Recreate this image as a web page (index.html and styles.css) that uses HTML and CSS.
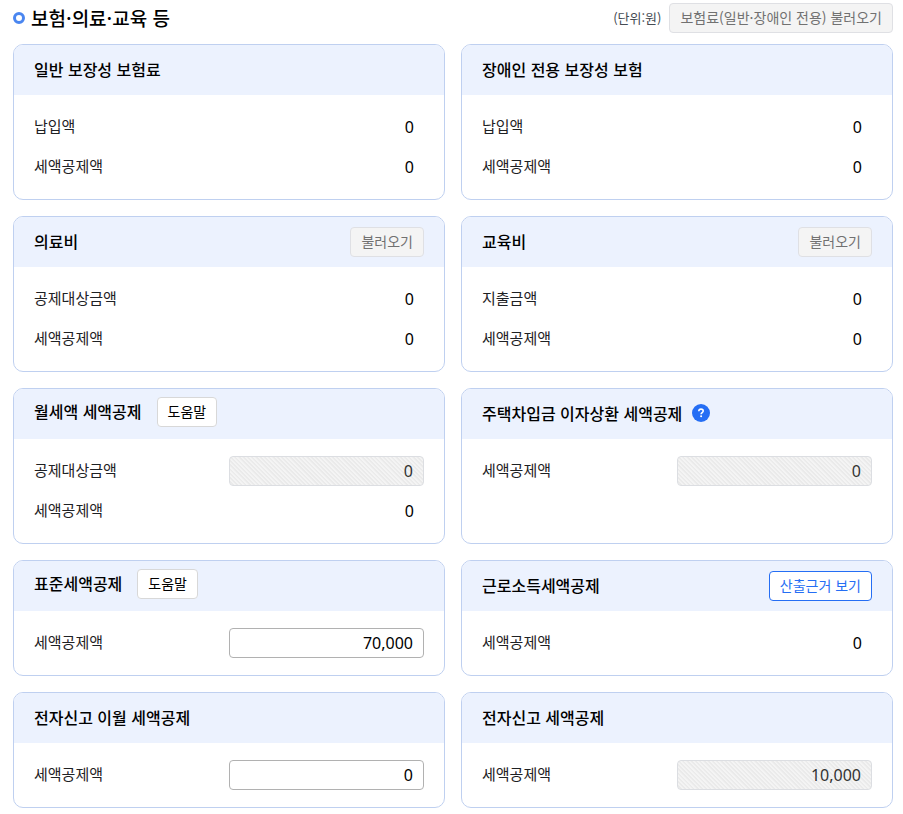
FILE: index.html
```html
<!DOCTYPE html>
<html lang="ko">
<head>
    <meta charset="UTF-8">
    <meta name="viewport" content="width=device-width, initial-scale=1.0">
    <title>보험·의료·교육 등</title>
    <link rel="stylesheet" href="styles.css">
</head>
<body>
    <header class="section-head">
        <h1 class="section-title">보험·의료·교육 등</h1>
        <div class="section-tools">
            <span class="unit">(단위:원)</span>
            <button class="btn" type="button" disabled>보험료(일반·장애인 전용) 불러오기</button>
        </div>
    </header>

    <main class="cards">
        <section class="card">
            <div class="card-head">
                <h2>일반 보장성 보험료</h2>
            </div>
            <dl class="card-body">
                <div class="row"><dt>납입액</dt><dd>0</dd></div>
                <div class="row"><dt>세액공제액</dt><dd>0</dd></div>
            </dl>
        </section>

        <section class="card">
            <div class="card-head">
                <h2>장애인 전용 보장성 보험</h2>
            </div>
            <dl class="card-body">
                <div class="row"><dt>납입액</dt><dd>0</dd></div>
                <div class="row"><dt>세액공제액</dt><dd>0</dd></div>
            </dl>
        </section>

        <section class="card">
            <div class="card-head">
                <h2>의료비</h2>
                <button class="btn push" type="button" disabled>불러오기</button>
            </div>
            <dl class="card-body">
                <div class="row"><dt>공제대상금액</dt><dd>0</dd></div>
                <div class="row"><dt>세액공제액</dt><dd>0</dd></div>
            </dl>
        </section>

        <section class="card">
            <div class="card-head">
                <h2>교육비</h2>
                <button class="btn push" type="button" disabled>불러오기</button>
            </div>
            <dl class="card-body">
                <div class="row"><dt>지출금액</dt><dd>0</dd></div>
                <div class="row"><dt>세액공제액</dt><dd>0</dd></div>
            </dl>
        </section>

        <section class="card">
            <div class="card-head with-help">
                <h2>월세액 세액공제</h2>
                <button class="btn" type="button">도움말</button>
            </div>
            <dl class="card-body">
                <div class="row">
                    <dt><label for="rent">공제대상금액</label></dt>
                    <dd class="field"><input id="rent" type="text" value="0" disabled></dd>
                </div>
                <div class="row"><dt>세액공제액</dt><dd>0</dd></div>
            </dl>
        </section>

        <section class="card">
            <div class="card-head">
                <h2>주택차입금 이자상환 세액공제</h2>
                <button class="tip" type="button" aria-label="도움말">
                    <svg viewBox="0 0 18 18" width="18" height="18" aria-hidden="true">
                        <circle cx="9" cy="9" r="9" fill="#256ef4"/>
                        <path d="M6.8 7.2C6.8 5.9 7.7 5.1 9 5.1s2.2.8 2.2 1.9c0 1.5-2.1 1.6-2.1 3.2" fill="none" stroke="#fff" stroke-width="1.6"/>
                        <circle cx="9.1" cy="12.3" r="1" fill="#fff"/>
                    </svg>
                </button>
            </div>
            <dl class="card-body">
                <div class="row">
                    <dt><label for="loan">세액공제액</label></dt>
                    <dd class="field"><input id="loan" type="text" value="0" disabled></dd>
                </div>
            </dl>
        </section>

        <section class="card">
            <div class="card-head with-help">
                <h2>표준세액공제</h2>
                <button class="btn" type="button">도움말</button>
            </div>
            <dl class="card-body">
                <div class="row">
                    <dt><label for="standard">세액공제액</label></dt>
                    <dd class="field"><input id="standard" type="text" value="70,000"></dd>
                </div>
            </dl>
        </section>

        <section class="card">
            <div class="card-head">
                <h2>근로소득세액공제</h2>
                <button class="btn btn-line push" type="button">산출근거 보기</button>
            </div>
            <dl class="card-body">
                <div class="row"><dt>세액공제액</dt><dd>0</dd></div>
            </dl>
        </section>

        <section class="card">
            <div class="card-head">
                <h2>전자신고 이월 세액공제</h2>
            </div>
            <dl class="card-body">
                <div class="row">
                    <dt><label for="carried">세액공제액</label></dt>
                    <dd class="field"><input id="carried" type="text" value="0"></dd>
                </div>
            </dl>
        </section>

        <section class="card">
            <div class="card-head">
                <h2>전자신고 세액공제</h2>
            </div>
            <dl class="card-body">
                <div class="row">
                    <dt><label for="efile">세액공제액</label></dt>
                    <dd class="field"><input id="efile" type="text" value="10,000" disabled></dd>
                </div>
            </dl>
        </section>
    </main>
</body>
</html>
```
FILE: styles.css
```css
*,
*::before {
    box-sizing: border-box;
}

body {
    margin: 0;
    padding: 3px 10px 6px 13px;
    background-color: #fff;
    color: #000;
    font-family: "Noto Sans CJK KR", sans-serif;
    font-size: 15px;
    line-height: 24px;
}

h1, h2, dl, dd {
    margin: 0;
}

.section-head {
    display: flex;
    justify-content: space-between;
    align-items: center;
    height: 30px;
    margin-bottom: 11px;
}

.section-title {
    display: flex;
    align-items: center;
    gap: 6px;
    font-size: 19px;
    font-weight: 500;
    line-height: 22px;
}

.section-title::before {
    content: "";
    width: 12px;
    height: 12px;
    border: 3px solid #4a86f0;
    border-radius: 50%;
}

.section-tools {
    display: flex;
    align-items: center;
    gap: 8px;
}

.unit {
    color: #464c53;
    font-size: 13px;
}

.btn {
    height: 30px;
    padding: 0 10px 2px;
    border: 1px solid #d8d8d8;
    border-radius: 4px;
    background-color: #fff;
    color: #000;
    font-family: inherit;
    font-size: 14px;
    line-height: 20px;
}

.btn:disabled {
    border-color: #dfe0e4;
    background-color: #f4f4f4;
    color: #717171;
}

.btn-line {
    border-color: #256ef4;
    color: #256ef4;
}

.push {
    margin-left: auto;
}

.cards {
    display: grid;
    grid-template-columns: 1fr 1fr;
    gap: 16px;
}

.card {
    border: 1px solid #bfd0f0;
    border-radius: 10px;
    overflow: hidden;
}

.card-head {
    display: flex;
    align-items: center;
    height: 50px;
    padding: 0 20px;
    background-color: #ecf2fe;
}

.card-head h2 {
    padding-bottom: 2px;
    font-size: 16px;
    font-weight: 500;
}

.with-help {
    gap: 15px;
    padding-bottom: 4px;
}

.tip {
    display: flex;
    margin-left: 10px;
    padding: 0 0 2px;
    border: none;
    background: none;
}

.card-body {
    display: flex;
    flex-direction: column;
    gap: 10px;
    padding: 17px 20px;
}

.row {
    display: flex;
    justify-content: space-between;
    align-items: center;
    height: 30px;
}

.row dt {
    padding-bottom: 2px;
    color: #1e2124;
}

.row dd {
    padding-right: 10px;
    font-family: "Noto Sans", sans-serif;
    font-size: 16px;
}

.row .field {
    width: 50%;
    padding-right: 0;
}

.field input {
    display: block;
    width: 100%;
    height: 30px;
    padding: 0 10px;
    border: 1px solid #b1b1b1;
    border-radius: 4px;
    color: #000;
    font-family: inherit;
    font-size: 16px;
    text-align: right;
}

.field input:disabled {
    border-color: #dcdee2;
    background: repeating-linear-gradient(45deg, #f4f4f4 0 1px, #eaeaea 2px 3px);
    color: #333;
}
```
